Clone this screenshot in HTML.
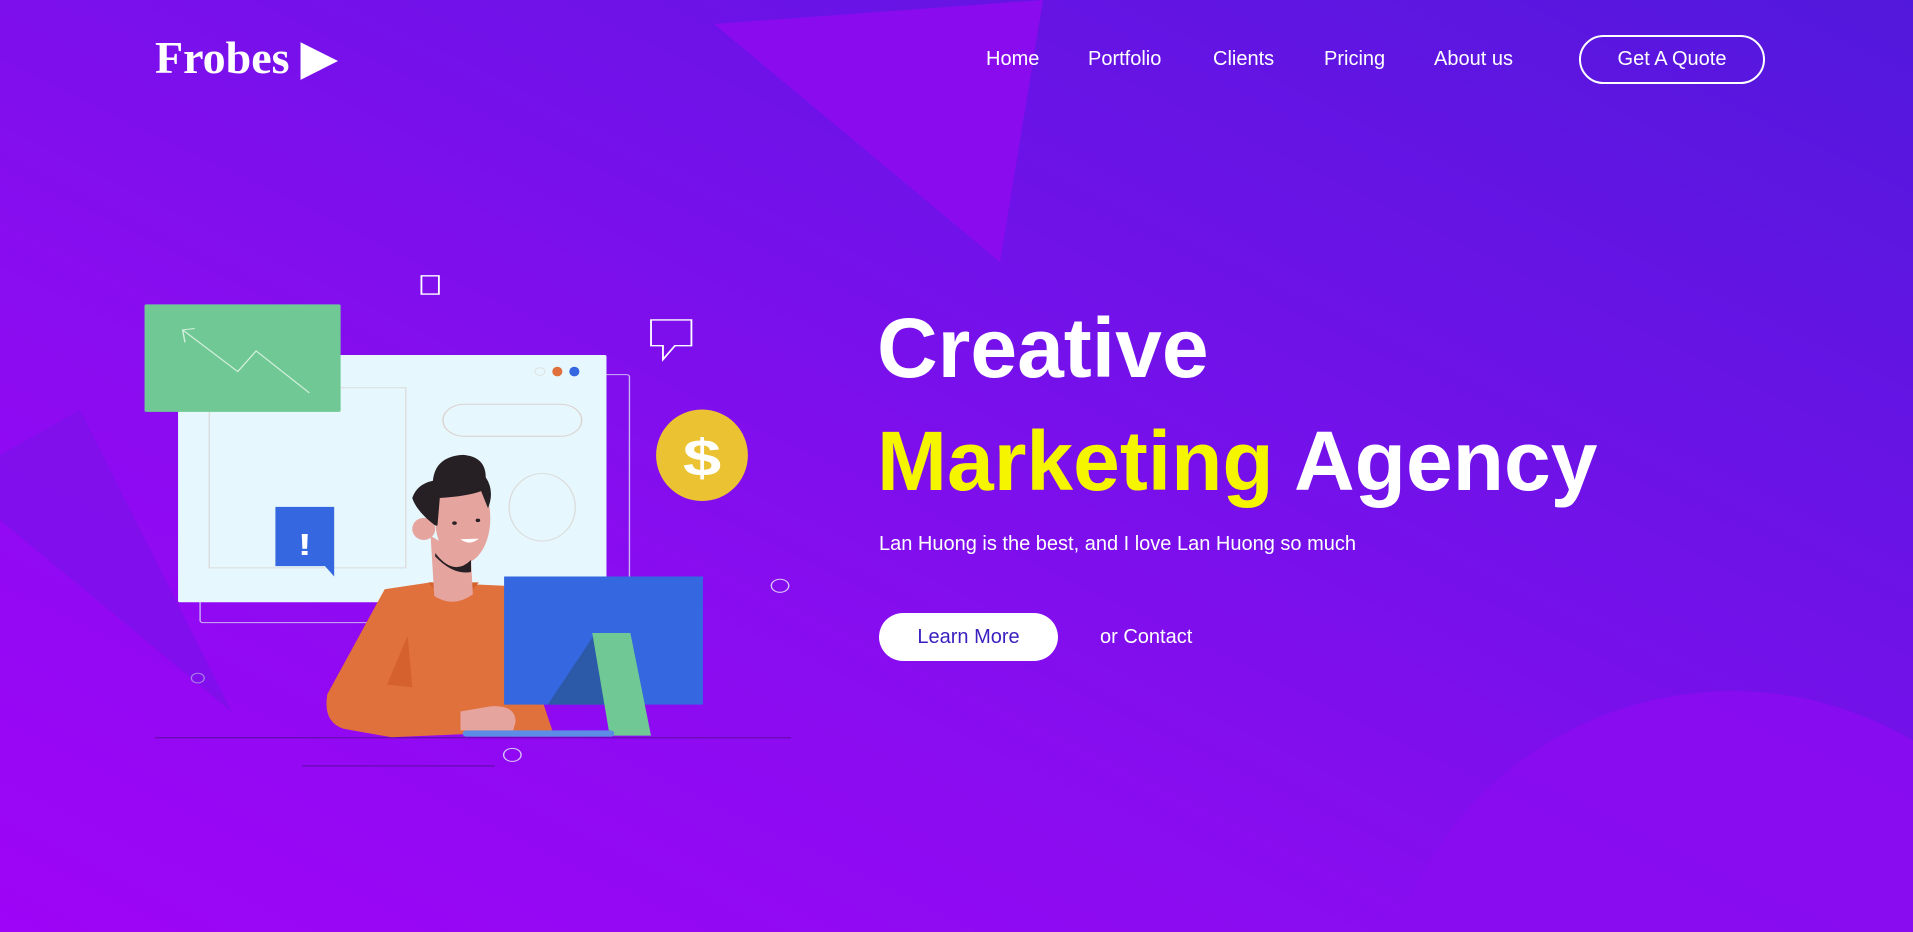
<!DOCTYPE html>
<html><head><meta charset="utf-8"><style>
*{margin:0;padding:0;box-sizing:border-box}
html,body{width:1913px;height:932px;overflow:hidden}
body{position:relative;font-family:"Liberation Sans",sans-serif;
background:linear-gradient(to top right,#9e04f7 0%,#8a0cf0 35%,#6f12e8 65%,#5218dc 100%);}
.bg{position:absolute;left:0;top:0}
.logo{position:absolute;left:155px;top:30px;font-family:"Liberation Serif",serif;font-weight:bold;font-size:46px;color:#fff}
.nav a{position:absolute;top:48px;color:#fff;font-size:20px;text-decoration:none}
.quote{position:absolute;left:1579px;top:35px;width:186px;height:49px;border:2px solid #fff;border-radius:25px;color:#fff;font-size:20px;text-align:center;line-height:45px}
h1{position:absolute;left:877px;color:#fff;font-size:84px;font-weight:bold;white-space:nowrap;line-height:1}
.sub{position:absolute;left:879px;top:533px;color:#fff;font-size:20px}
.lm{position:absolute;left:879px;top:613px;width:179px;height:48px;background:#fff;border-radius:24px;color:#3a1fc0;font-size:20px;text-align:center;line-height:48px}
.oc{position:absolute;left:1100px;top:626px;color:#fff;font-size:20px}
</style></head><body>
<svg class="bg" width="1913" height="932">
<polygon points="714,24 1043,0 1000,262" fill="#8a0cee"/>
<polygon points="0,455 80,410 232,712 0,520" fill="#7d10ea" opacity="0.8"/>
<circle cx="1732" cy="1045" r="354" fill="#8a0cf0" opacity="0.9"/>
</svg>
<div class="logo">Frobes ▶</div>
<div class="nav"><a style="left:986px">Home</a><a style="left:1088px">Portfolio</a><a style="left:1213px">Clients</a><a style="left:1324px">Pricing</a><a style="left:1434px">About us</a></div>
<div class="quote">Get A Quote</div>
<h1 style="top:306px">Creative</h1>
<h1 style="top:419px"><span style="color:#f5f500">Marketing</span> Agency</h1>
<div class="sub">Lan Huong is the best, and I love Lan Huong so much</div>
<div class="lm">Learn More</div>
<div class="oc">or Contact</div>
<svg style="position:absolute;left:100px;top:250px" width="720" height="540" viewBox="0 0 1568 1568" preserveAspectRatio="none">
<rect x="218" y="362" width="935" height="720" rx="6" fill="none" stroke="#c9b3f3" stroke-width="3"/>
<rect x="170" y="305" width="933" height="718" rx="4" fill="#e6f8fd"/>
<rect x="238" y="400" width="428" height="523" fill="none" stroke="#dcdcdc" stroke-width="3"/>
<rect x="747" y="448" width="302" height="93" rx="46" fill="none" stroke="#dcd2d0" stroke-width="3"/>
<ellipse cx="963" cy="747" rx="72" ry="98" fill="none" stroke="#dcdcdc" stroke-width="3"/>
<circle cx="958" cy="353" r="11" fill="none" stroke="#ddd" stroke-width="2"/>
<ellipse cx="996" cy="353" rx="11" ry="14" fill="#e0703c"/>
<ellipse cx="1033" cy="353" rx="11" ry="14" fill="#3568e0"/>
<rect x="97" y="158" width="427" height="312" rx="4" fill="#70c994"/>
<polyline points="456,415 340,293 300,353 180,232" fill="none" stroke="#d6f0df" stroke-width="3"/>
<polyline points="206,228 180,232 185,268" fill="none" stroke="#d6f0df" stroke-width="3"/>
<rect x="700" y="75" width="38" height="53" fill="none" stroke="#fff" stroke-width="4"/>
<path d="M1200,203 H1288 V278 H1252 L1226,318 V278 H1200 Z" fill="none" stroke="#fff" stroke-width="4"/>
<ellipse cx="1311" cy="596" rx="100" ry="133" fill="#eac232"/>
<text x="1311" y="655" font-size="150" font-weight="bold" fill="#fff" text-anchor="middle" font-family="Liberation Sans">$</text>
<path d="M382,746 H510 V948 L490,918 H382 Z" fill="#3568e0"/>
<text x="446" y="885" font-size="90" font-weight="bold" fill="#fff" text-anchor="middle" font-family="Liberation Sans">!</text>
<circle cx="1481" cy="975" r="19" fill="none" stroke="#d9c4f7" stroke-width="3"/>
<circle cx="213" cy="1243" r="14" fill="none" stroke="#a87ce8" stroke-width="3"/>
<circle cx="898" cy="1466" r="19" fill="none" stroke="#d9c4f7" stroke-width="3"/>
<line x1="120" y1="1416" x2="1505" y2="1416" stroke="#6a0ab8" stroke-width="4"/>
<line x1="440" y1="1498" x2="860" y2="1498" stroke="#6a0ab8" stroke-width="4"/>
<path d="M620,985 L720,965 L880,975 L985,1395 L635,1415 L530,1390 Q485,1370 495,1290 Z" fill="#e0703c"/>
<path d="M670,1120 L680,1270 L625,1262 Z" fill="#d4612e"/>
<path d="M715,965 Q770,1060 825,965 Z" fill="#d4612e"/>
<path d="M720,830 L728,1005 Q770,1040 812,1000 L808,900 Z" fill="#e6a49e"/>
<ellipse cx="790" cy="780" rx="60" ry="130" fill="#e6a49e"/>
<ellipse cx="705" cy="810" rx="25" ry="32" fill="#e6a49e"/>
<path d="M730,880 Q770,950 808,900 L808,935 Q770,945 730,890 Z" fill="#261f24"/>
<path d="M730,800 Q690,760 680,720 Q690,680 725,670 Q730,600 790,595 Q840,600 840,660 Q860,700 845,750 L830,700 Q800,715 740,720 L735,800 Z" fill="#261f24"/>
<path d="M785,840 Q805,860 825,838 Z" fill="#fff"/>
<circle cx="772" cy="793" r="5" fill="#261f24"/><circle cx="823" cy="785" r="5" fill="#261f24"/>
<rect x="880" y="948" width="433" height="372" fill="#3568e0"/>
<path d="M975,1320 L1075,1120 L1100,1320 Z" fill="#2d5aa8"/>
<path d="M1072,1112 H1155 L1200,1410 H1110 Z" fill="#70c994"/>
<rect x="790" y="1395" width="330" height="18" rx="8" fill="#5c8ce6"/>
<path d="M785,1340 L850,1325 Q905,1320 905,1370 L900,1395 H785 Z" fill="#e6a49e"/>
</svg>
</body></html>
